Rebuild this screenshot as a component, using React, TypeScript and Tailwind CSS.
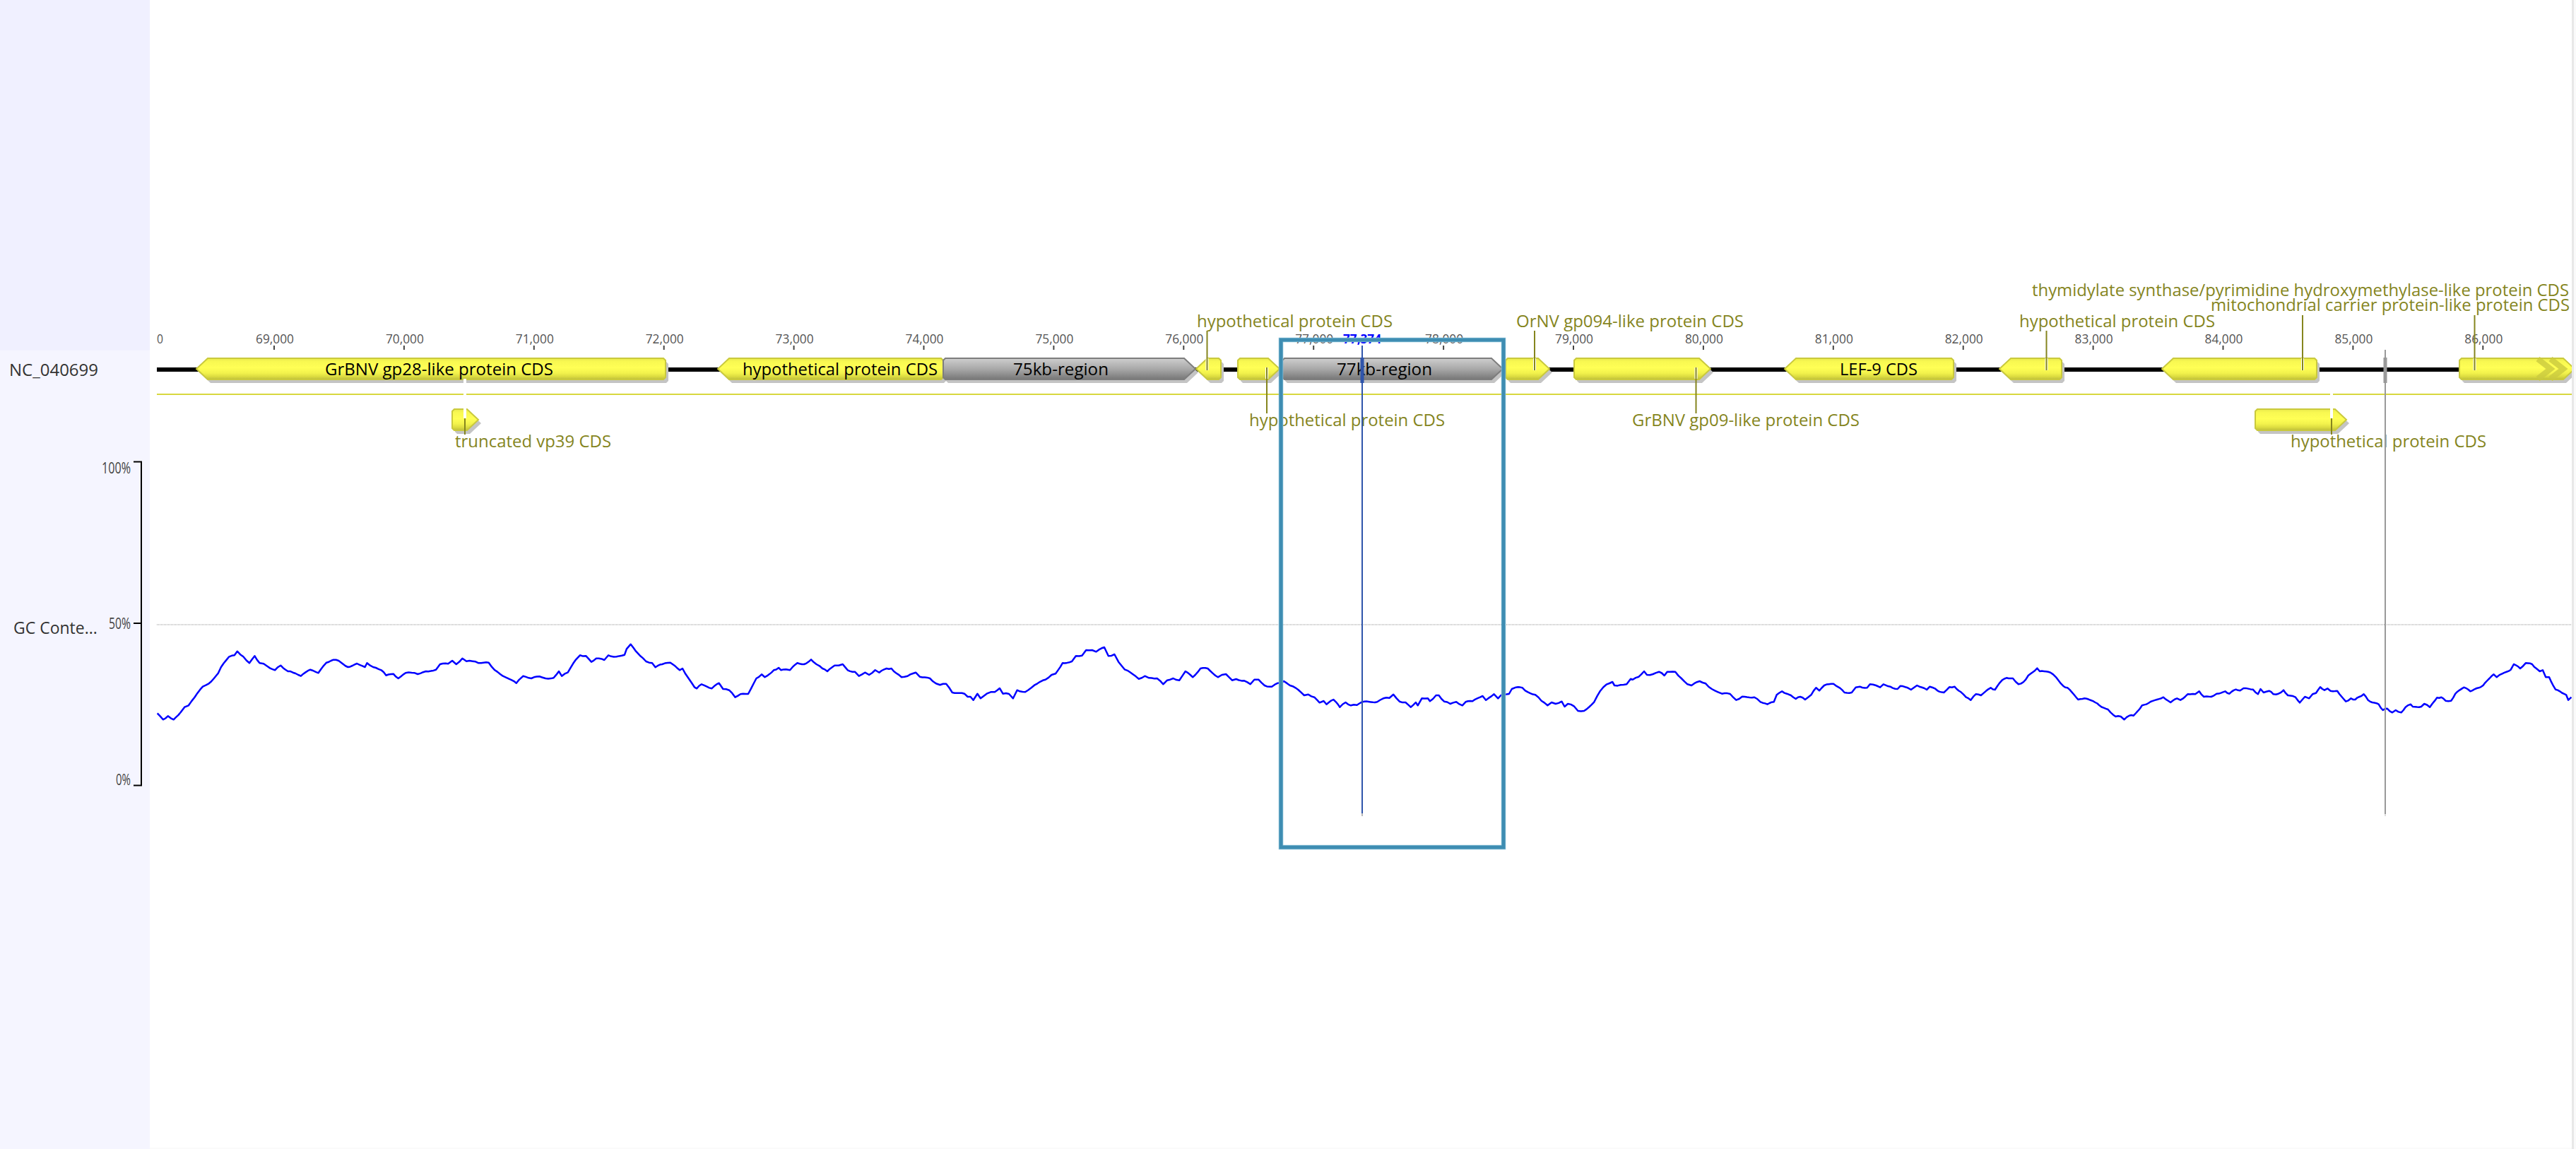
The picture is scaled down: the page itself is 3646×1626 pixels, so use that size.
const TRACE_A = [388,1108,402,1135,414,1120,428,1135,445,1105,455,1082,465,1075,480,1040,500,995,515,982,538,938,545,912,565,868,578,862,585,845,600,868,615,895,628,865,640,895,650,898,660,910,678,925,692,905,710,930,722,935,742,950,765,923,785,937,805,893,822,881,835,885,858,912,880,897,900,912,905,895,920,912,940,925,952,947,970,941,982,960,1000,937,1015,936,1030,942,1050,930,1075,923,1085,900,1105,898,1115,885,1125,900,1140,875,1150,887,1165,887,1180,895,1205,893,1220,925,1240,950,1250,958,1273,980,1290,950,1310,960,1330,952,1345,960,1365,958,1378,930,1385,950,1400,935,1420,880,1430,862,1445,865,1458,890,1470,875,1490,882,1500,862,1520,868,1540,860,1545,835,1555,815,1568,845];
const TRACE_B = [0,185,10,203,25,228,40,235,48,253,65,240,85,233,95,245,108,265,115,258,130,300,145,338,150,343,162,325,175,335,187,343,205,320,215,345,230,350,245,380,258,367,277,366,297,300,310,283,318,295,340,265,352,255,358,265,370,262,380,265,398,235,415,240,432,220,445,240,460,258,472,270,490,245,500,245,510,240,522,265,540,272,550,290,565,275,575,285,590,265,600,275,618,258,630,258,636,270,655,295,670,290,690,275,700,293,725,300,740,322,750,328,765,323,780,360,810,365,818,378,825,378,832,392,842,365,850,385,865,365,875,358,885,358,897,342,905,365,920,366,930,385,940,350,960,358,975,340,990,322,1010,305,1025,285,1035,280,1052,235,1075,228,1085,205,1100,203,1110,180,1125,180,1135,187,1155,168,1165,205,1180,198,1190,230,1205,262,1225,282,1240,302,1255,290,1265,298,1285,300,1300,325,1310,308,1325,300,1340,308,1355,270,1373,295,1392,258,1410,258,1435,295,1445,285,1455,282,1470,308,1480,303,1500,310,1515,325,1525,305,1535,305,1550,330,1568,335];
const TRACE_C = [0,330,15,320,30,312,45,330,65,348,80,372,90,368,105,380,118,403,128,396,135,410,152,390,168,422,182,402,195,415,210,413,228,398,260,400,275,385,290,383,300,368,315,398,330,402,343,422,355,402,360,415,370,385,385,385,390,397,405,372,412,372,425,398,440,408,455,400,470,415,478,400,495,397,520,375,528,392,548,367,558,385,565,372,585,366,592,345,602,338,618,340,625,352,650,370,665,395,680,415,690,402,700,408,715,398,722,420,730,408,745,418,755,438,770,438,795,400,810,353,825,326,840,315,845,330,860,328,875,325,885,302,890,305,905,293,918,270,925,285,940,282,955,272,968,288,975,272,995,272,1010,300,1025,325,1035,330,1055,312,1070,322,1085,345,1100,358,1110,365,1130,366,1145,392,1160,377,1190,380,1205,400,1222,410,1238,400,1245,370,1258,355,1270,365,1280,372,1292,387,1303,378,1315,390,1330,370,1342,340,1350,352,1362,330,1385,323,1400,340,1412,360,1430,360,1440,338,1450,335,1468,340,1475,325,1490,330,1500,338,1508,325,1525,335,1543,345,1550,332,1568,340];
const TRACE_D = [0,335,8,348,22,330,45,348,52,335,60,340,70,352,85,360,98,337,110,335,125,358,137,380,148,392,160,367,172,372,195,340,205,348,222,307,232,298,247,300,260,325,272,315,283,288,304,257,310,270,335,275,348,295,365,332,375,340,400,390,415,385,440,402,450,415,470,432,488,462,500,462,508,475,520,458,530,458,550,415,565,405,600,380,617,402,632,385,640,392,657,367,675,367,684,355,695,378,712,378,725,365,745,355,755,365,770,347,780,352,788,342,810,347,822,367,828,345,835,360,848,353,858,367,870,365,882,350,892,372,910,380,920,403,932,378,942,385,950,367,958,362,968,337,978,350,985,343,992,353,1008,353,1028,398,1040,385,1050,390,1060,378,1070,367,1080,392,1090,402,1105,410,1115,435,1125,428,1137,445,1145,435,1158,445,1168,422,1180,410,1185,420,1205,420,1212,408,1225,422,1242,382,1252,380,1262,395,1275,395,1285,365,1305,338,1320,355,1335,342,1350,330,1365,300,1375,283,1382,295,1395,280,1415,263,1422,240,1437,258,1450,235,1465,240,1475,258,1483,270,1490,265,1497,295,1505,295,1520,347,1530,355,1545,370,1550,392,1557,380];

const toPage = (raw: number[], ox: number, oy: number, sx: number) => {
  const out: [number, number][] = [];
  for (let i = 0; i < raw.length; i += 2) out.push([ox + raw[i] / sx, oy + raw[i + 1] / 3]);
  return out;
};

const tracePoints = [
  ...toPage(TRACE_A, 0, 640, 1.742),
  ...toPage(TRACE_B, 900, 860, 1.742).slice(1),
  ...toPage(TRACE_C, 1800, 860, 1.742).slice(1),
  ...toPage(TRACE_D, 2700, 860, 1.6575).slice(1),
];

// small fixed wobble between the traced points, the real window average is jagged
const gcPath = () => {
  const pts: string[] = [];
  tracePoints.forEach(([x, y], i) => {
    pts.push(`${x.toFixed(1)},${y.toFixed(1)}`);
    const next = tracePoints[i + 1];
    if (!next) return;
    const steps = Math.floor((next[0] - x) / 3);
    for (let s = 1; s < steps; s++) {
      const t = s / steps;
      const wobble = Math.sin((x + s) * 12.9898) * 0.8;
      pts.push(`${(x + (next[0] - x) * t).toFixed(1)},${(y + (next[1] - y) * t + wobble).toFixed(1)}`);
    }
  });
  return pts.join(" ");
};

const TRACK_Y = 507;
const ROW2_Y = 579;
const H = 30;

const arrow = (x0: number, x1: number, dir: "f" | "r", y: number) => {
  const b = y + H;
  const m = y + H / 2;
  return dir === "f"
    ? `M${x0 + 3} ${y}L${x1 - 16} ${y}L${x1} ${m}L${x1 - 16} ${b}L${x0 + 3} ${b}L${x0} ${b - 3}L${x0} ${y + 3}Z`
    : `M${x0} ${m}L${x0 + 16} ${y}L${x1 - 3} ${y}L${x1} ${y + 3}L${x1} ${b - 3}L${x1 - 3} ${b}L${x0 + 16} ${b}Z`;
};

type Feature = { x0: number; x1: number; dir: "f" | "r"; y: number; grey?: boolean; label?: string; lx?: number; lw?: number };

const features: Feature[] = [
  { x0: 278, x1: 942, dir: "r", y: TRACK_Y, label: "GrBNV gp28-like protein CDS", lx: 460, lw: 323 },
  { x0: 1016, x1: 1335, dir: "r", y: TRACK_Y, label: "hypothetical protein CDS", lx: 1051, lw: 276 },
  { x0: 1335, x1: 1692, dir: "f", y: TRACK_Y, grey: true, label: "75kb-region", lx: 1434, lw: 135 },
  { x0: 1693, x1: 1728, dir: "r", y: TRACK_Y },
  { x0: 1752, x1: 1811, dir: "f", y: TRACK_Y },
  { x0: 1815, x1: 2127, dir: "f", y: TRACK_Y, grey: true, label: "77kb-region", lx: 1892, lw: 135 },
  { x0: 2131, x1: 2193, dir: "f", y: TRACK_Y },
  { x0: 2228, x1: 2421, dir: "f", y: TRACK_Y },
  { x0: 2526, x1: 2765, dir: "r", y: TRACK_Y, label: "LEF-9 CDS", lx: 2604, lw: 110 },
  { x0: 2830, x1: 2918, dir: "r", y: TRACK_Y },
  { x0: 3060, x1: 3279, dir: "r", y: TRACK_Y },
  { x0: 3481, x1: 3644, dir: "f", y: TRACK_Y },
  { x0: 640, x1: 677, dir: "f", y: ROW2_Y },
  { x0: 3192, x1: 3321, dir: "f", y: ROW2_Y },
];

const callouts = [
  { text: "truncated vp39 CDS", x: 644, w: 221, cy: 626, lx: 658, y1: 592, y2: 615 },
  { text: "hypothetical protein CDS", x: 1694, w: 277, cy: 456, lx: 1708.5, y1: 468, y2: 524 },
  { text: "hypothetical protein CDS", x: 1768, w: 277, cy: 596, lx: 1793, y1: 520, y2: 585 },
  { text: "OrNV gp094-like protein CDS", x: 2146, w: 322, cy: 456, lx: 2172, y1: 468, y2: 524 },
  { text: "GrBNV gp09-like protein CDS", x: 2310, w: 322, cy: 596, lx: 2400.5, y1: 520, y2: 585 },
  { text: "hypothetical protein CDS", x: 2858, w: 277, cy: 456, lx: 2896.5, y1: 468, y2: 524 },
  { text: "thymidylate synthase/pyrimidine hydroxymethylase-like protein CDS", x: 2876, w: 760, cy: 412, lx: 3259, y1: 446, y2: 524 },
  { text: "mitochondrial carrier protein-like protein CDS", x: 3129, w: 508, cy: 433, lx: 3502.5, y1: 446, y2: 524 },
  { text: "hypothetical protein CDS", x: 3242, w: 277, cy: 626, lx: 3300, y1: 592, y2: 615 },
];

const ticks = Array.from({ length: 18 }, (_, i) => ({
  x: 388 + 183.9 * i,
  label: `${69 + i},000`,
}));

function ChartTrack() {
  return (
    <svg width={3428} height={1624} viewBox="212 0 3428 1624" className="block font-['Open_Sans',sans-serif]">
      <defs>
        <linearGradient id="cds" x1="0" y1="0" x2="0" y2="1">
          <stop offset="0" stopColor="#e9e94c" />
          <stop offset="0.15" stopColor="#f8f851" />
          <stop offset="0.45" stopColor="#ffff55" />
          <stop offset="0.7" stopColor="#f2f24c" />
          <stop offset="0.88" stopColor="#d9d93f" />
          <stop offset="1" stopColor="#bcbc3a" />
        </linearGradient>
        <linearGradient id="region" x1="0" y1="0" x2="0" y2="1">
          <stop offset="0" stopColor="#cecece" />
          <stop offset="0.5" stopColor="#a9a9a9" />
          <stop offset="0.85" stopColor="#868686" />
          <stop offset="1" stopColor="#767676" />
        </linearGradient>
      </defs>

      <text x={222} y={486} fontSize={18} fill="#555" textLength={9} lengthAdjust="spacingAndGlyphs">0</text>
      {ticks.map((t) => (
        <g key={t.label}>
          <text x={t.x + 1 - 27} y={486} fontSize={18} fill="#555" textLength={54} lengthAdjust="spacingAndGlyphs">{t.label}</text>
          <line x1={t.x} x2={t.x} y1={489} y2={495} stroke="#444" strokeWidth={2} />
        </g>
      ))}
      <text x={1901} y={486} fontSize={18} fontWeight={700} fill="#0000ff" textLength={54} lengthAdjust="spacingAndGlyphs">77,374</text>

      <rect x={222} y={520} width={3418} height={6} fill="#000" />
      <rect x={222} y={557} width={3418} height={2} fill="#d8d83f" />

      {features.map((f) => (
        <path key={`s${f.x0}`} d={arrow(f.x0, f.x1, f.dir, f.y)} transform="translate(4 5)" fill="#c4c4c4" />
      ))}
      {features.map((f) => (
        <g key={f.x0}>
          <path
            d={arrow(f.x0, f.x1, f.dir, f.y)}
            fill={f.grey ? "url(#region)" : "url(#cds)"}
            stroke={f.grey ? "#7d7d7d" : "#c9c93d"}
            strokeWidth={2}
          />
          {f.label && (
            <text x={f.lx} y={531} fontSize={23} fill="#000" textLength={f.lw} lengthAdjust="spacingAndGlyphs">
              {f.label}
            </text>
          )}
        </g>
      ))}
      <polyline points="3592,508 3610,522 3592,536" fill="none" stroke="#caca3e" strokeWidth={8} opacity={0.8} />
      <polyline points="3610,508 3628,522 3610,536" fill="none" stroke="#caca3e" strokeWidth={8} opacity={0.8} />

      {callouts.map((c) => (
        <g key={c.text + c.x}>
          <line x1={c.lx} x2={c.lx} y1={Math.max(c.y1, 507)} y2={Math.min(c.y2, 536)} stroke="#fff" strokeWidth={4} />
          <line x1={c.lx} x2={c.lx} y1={c.y1} y2={c.y2} stroke="#85851e" strokeWidth={2} />
          <text x={c.x} y={c.cy + 7} fontSize={23} fill="#85851e" textLength={c.w} lengthAdjust="spacingAndGlyphs">
            {c.text}
          </text>
        </g>
      ))}

      <line x1={222} x2={3640} y1={884} y2={884} stroke="#c4c4c4" strokeWidth={2} strokeDasharray="1 1" />
      <polyline points={gcPath()} fill="none" stroke="#0000ff" strokeWidth={2.5} strokeLinejoin="round" />

      <line x1={1928} x2={1928} y1={489} y2={1151} stroke="#2f55ab" strokeWidth={2} />
      <line x1={1928} x2={1928} y1={1151} y2={1155} stroke="#b8b8b8" strokeWidth={2} />
      <rect x={1925.5} y={506} width={5} height={36} fill="#2f55ab" />
      <line x1={3376} x2={3376} y1={495} y2={1152} stroke="#999" strokeWidth={2} />
      <line x1={3376} x2={3376} y1={1152} y2={1155} stroke="#ddd" strokeWidth={2} />
      <rect x={3373.5} y={506} width={5} height={36} fill="#999" />

      <rect x={1813} y={481} width={315} height={718} fill="none" stroke="#8cc3da" strokeWidth={6.5} />
      <rect x={1813} y={481} width={315} height={718} fill="none" stroke="#3e8db2" strokeWidth={5} />
    </svg>
  );
}

function GcAxis() {
  return (
    <svg width={72} height={480} viewBox="140 650 72 480" className="block font-['Open_Sans',sans-serif]">
      <path d="M189 655.5H200V1113.5H189M189 884H200" fill="none" stroke="#000" strokeWidth={2} />
      <text x={144} y={672} fontSize={21} fill="#444" textLength={41} lengthAdjust="spacingAndGlyphs">100%</text>
      <text x={154} y={892} fontSize={21} fill="#444" textLength={31} lengthAdjust="spacingAndGlyphs">50%</text>
      <text x={164} y={1113} fontSize={21} fill="#444" textLength={21} lengthAdjust="spacingAndGlyphs">0%</text>
    </svg>
  );
}

export default function App() {
  return (
    <div className="flex h-[1626px] w-[3646px] bg-[#fafafa] font-['Open_Sans',sans-serif]">
      <aside className="flex w-[212px] shrink-0 flex-col">
        <div className="h-[496px] bg-[#f0f0ff]" />
        <div className="flex-1 bg-[#f5f5ff]">
          <div className="flex h-[54px] items-center pl-[13px] text-[24px] leading-none text-[#333]">NC_040699</div>
          <div className="mt-[100px] flex h-[476px] items-center justify-between">
            <span className="pl-[19px] text-[23px] leading-none text-[#333]">GC Conte...</span>
            <GcAxis />
          </div>
        </div>
      </aside>
      <main className="h-[1624px] w-[3428px] shrink-0 bg-white">
        <ChartTrack />
      </main>
      <div className="flex-1 border-l-[3px] border-[#e8e8e8]" />
    </div>
  );
}
